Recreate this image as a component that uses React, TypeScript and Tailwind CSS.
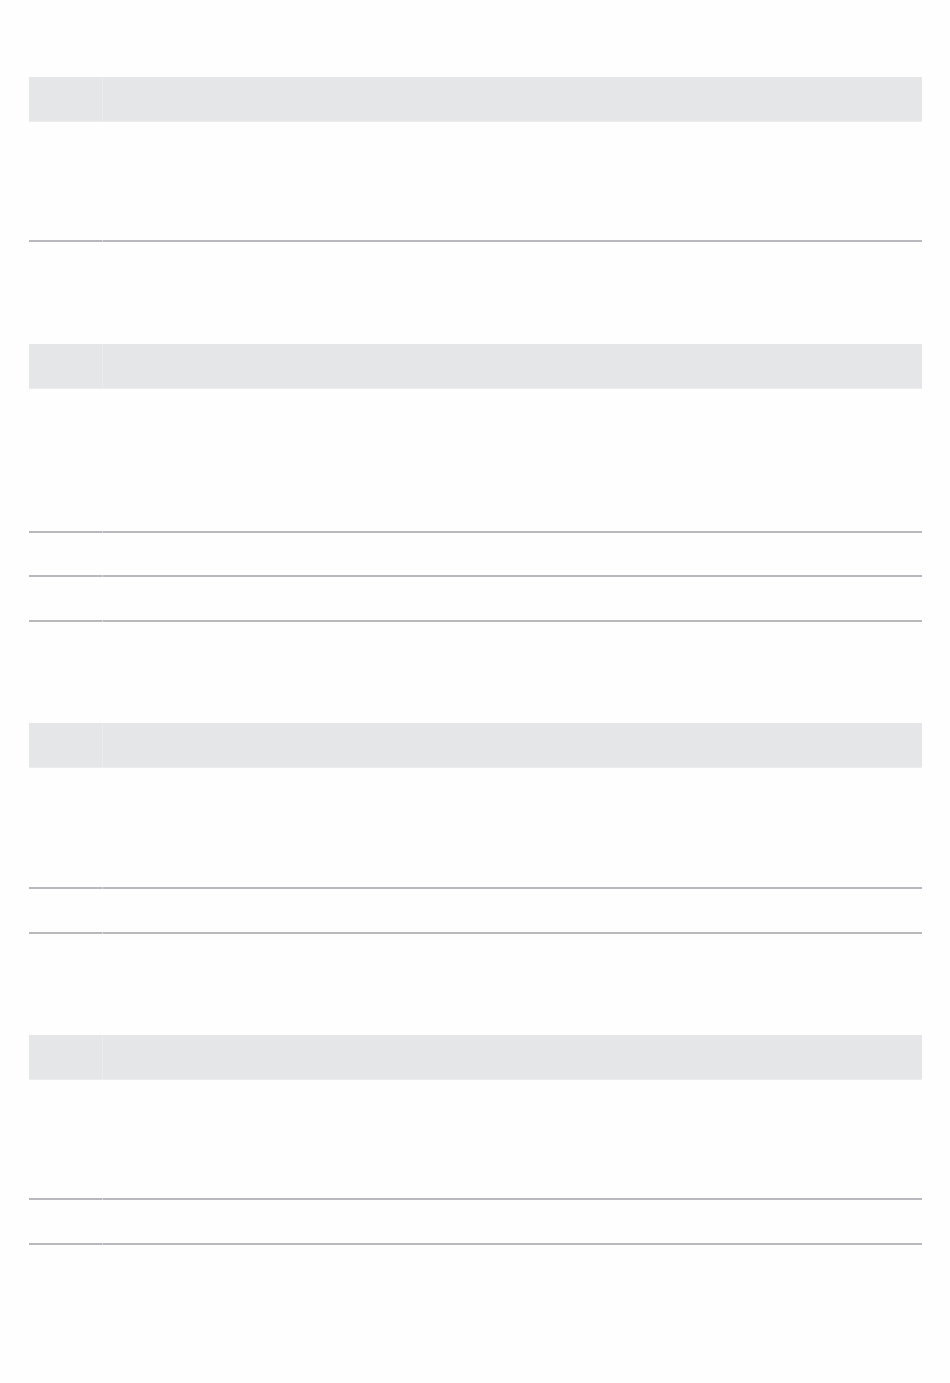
import React from "react";

type TableSpec = { rows: number[]; mt: string };

const tables: TableSpec[] = [
  { rows: [118], mt: "mt-0" },
  { rows: [142, 42, 43], mt: "mt-[102px]" },
  { rows: [119, 43], mt: "mt-[101px]" },
  { rows: [118, 43], mt: "mt-[101px]" },
];

function HeaderRow() {
  return (
    <div className="flex h-[45px]">
      <div className="w-[73px] bg-[#e5e6e7] border-b border-[#ededee]" />
      <div className="w-px bg-[#ececed]" />
      <div className="flex-1 bg-[#e5e6e7] border-b border-[#ededee]" />
    </div>
  );
}

function BodyRow({ h }: { h: number }) {
  return (
    <div className="flex">
      <div className="w-[73px] border-b-2 border-[#b9b9bd]" style={{ height: h + 2 }} />
      <div className="w-px border-b-2 border-[#d6d6d9]" style={{ height: h + 2 }} />
      <div className="flex-1 border-b-2 border-[#b9b9bd]" style={{ height: h + 2 }} />
    </div>
  );
}

export default function App() {
  return (
    <div className="min-h-[1383px] w-[950px] bg-[#fefefe] pt-[77px] pl-[29px] pr-[28px] font-['Liberation_Sans',sans-serif]">
      <div className="flex flex-col">
        {tables.map((t, i) => (
          <div key={i} className={`flex flex-col ${t.mt}`}>
            <HeaderRow />
            {t.rows.map((h, j) => (
              <BodyRow key={j} h={h} />
            ))}
          </div>
        ))}
      </div>
    </div>
  );
}
